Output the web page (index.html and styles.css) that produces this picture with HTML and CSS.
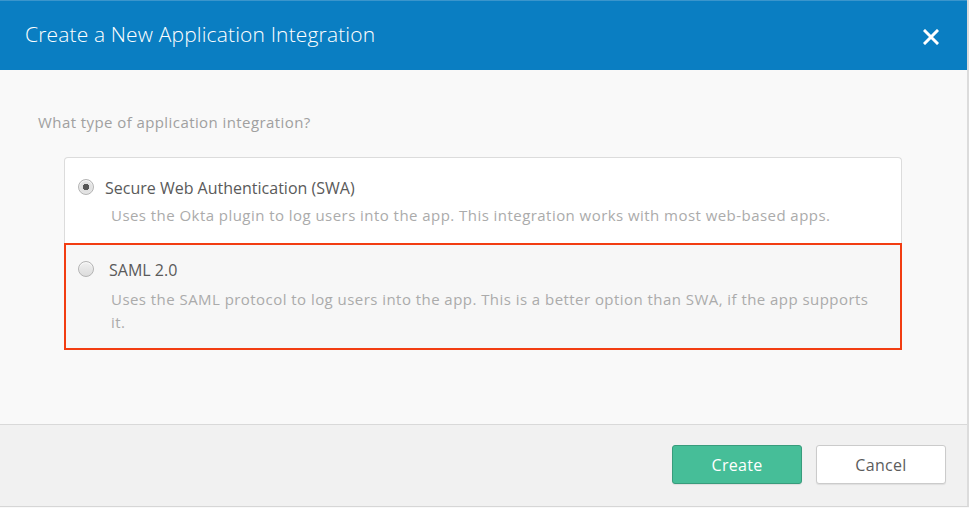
FILE: index.html
```html
<!DOCTYPE html>
<html lang="en">
<head>
<meta charset="utf-8">
<title>Create a New Application Integration</title>
<link rel="stylesheet" href="styles.css">
</head>
<body>
<div class="modal">
  <header class="modal-header">
    <h1 class="modal-title">Create a New Application Integration</h1>
    <button class="close" aria-label="Close">
      <svg width="16" height="16" viewBox="0 0 16 16"><path d="M2 2 L14 14 M14 2 L2 14" stroke="#fff" stroke-width="3" stroke-linecap="square"/></svg>
    </button>
  </header>
  <main class="modal-body">
    <p class="question">What type of application integration?</p>
    <div class="options">
      <label class="option option-first">
        <span class="radio checked"></span>
        <span class="option-text">
          <span class="option-title">Secure Web Authentication (SWA)</span>
          <span class="option-desc">Uses the Okta plugin to log users into the app. This integration works with most web-based apps.</span>
        </span>
      </label>
      <label class="option option-highlight">
        <span class="radio"></span>
        <span class="option-text">
          <span class="option-title">SAML 2.0</span>
          <span class="option-desc">Uses the SAML protocol to log users into the app. This is a better option than SWA, if the app supports it.</span>
        </span>
      </label>
    </div>
  </main>
  <footer class="modal-footer">
    <button class="btn btn-primary">Create</button>
    <button class="btn btn-default">Cancel</button>
  </footer>
</div>
</body>
</html>
```

FILE: styles.css
```css
html, body {
  margin: 0;
  padding: 0;
  background: #f9f9f9;
}
body {
  font-family: "Open Sans", "Noto Sans", Arial, sans-serif;
}
.modal {
  width: 967px;
  height: 506px;
  border-right: 2px solid #dcdcdc;
  border-bottom: 1px solid #d6d6d6;
  display: flex;
  flex-direction: column;
  background: #f9f9f9;
}
.modal-header {
  height: 70px;
  flex: none;
  box-sizing: border-box;
  background: #0a7ec2;
  border-top: 1px solid #3a95cc;
  display: flex;
  align-items: center;
  justify-content: space-between;
  padding: 0 25px 0 25px;
}
.modal-title {
  margin: 0;
  font-size: 21px;
  font-weight: 300;
  color: #fff;
  letter-spacing: 0.15px;
  padding-bottom: 3px;
}
.close {
  background: none;
  border: 0;
  padding: 0;
  width: 22px;
  height: 22px;
  display: flex;
  align-items: center;
  justify-content: center;
  margin-top: 2px;
}
.modal-body {
  flex: 1;
  padding: 0;
}
.question {
  margin: 42px 0 0 38px;
  font-size: 15px;
  letter-spacing: 0.42px;
  line-height: 20px;
  color: #a0a0a0;
}
.options {
  margin: 25px 0 0 64px;
  width: 838px;
}
.option {
  display: flex;
  align-items: flex-start;
  box-sizing: border-box;
}
.option-first {
  background: #fff;
  border: 1px solid #dcdcdc;
  border-bottom: 0;
  border-radius: 4px 4px 0 0;
  height: 86px;
  padding: 20px 0 0 13px;
}
.option-highlight {
  background: #f7f7f7;
  border: 2px solid #f23d12;
  height: 107px;
  padding: 15px 0 0 12px;
}
.radio {
  flex: none;
  width: 14px;
  height: 14px;
  border-radius: 50%;
  border: 1px solid #b4b4b4;
  background: linear-gradient(#f0f0f0, #dcdcdc);
  box-shadow: inset 0 1px 1px rgba(255,255,255,0.8);
  margin-top: 1px;
}
.radio.checked {
  background: radial-gradient(circle, #555 0, #555 3px, #e0e0e0 3.5px, #e8e8e8 100%);
}
.option-text {
  display: flex;
  flex-direction: column;
  margin-left: 11px;
}
.option-highlight .option-text {
  margin-left: 15px;
}
.option-title {
  font-size: 16px;
  line-height: 20px;
  color: #5a5a5a;
}
.option-desc {
  font-size: 15px;
  letter-spacing: 0.45px;
  line-height: 23px;
  color: #ababab;
  margin-top: 6px;
  margin-left: 6px;
  width: 760px;
}
.option-highlight .option-desc {
  margin-left: 2px;
  margin-top: 8px;
  width: 770px;
}
.modal-footer {
  flex: none;
  height: 82px;
  box-sizing: border-box;
  border-top: 1px solid #d9d9d9;
  background: #f1f1f1;
  display: flex;
  justify-content: flex-end;
  align-items: flex-start;
  gap: 14px;
  padding: 20px 21px 0 0;
}
.btn {
  width: 130px;
  height: 39px;
  border-radius: 3px;
  font-family: "Open Sans", "Noto Sans", Arial, sans-serif;
  font-size: 16px;
  letter-spacing: 0.3px;
  cursor: pointer;
}
.btn-primary {
  background: #46be98;
  border: 1px solid #389c7c;
  color: #fff;
  box-shadow: 0 1px 1px rgba(0,0,0,0.08);
}
.btn-default {
  background: #fff;
  border: 1px solid #cbcbcb;
  color: #5c5c5c;
  box-shadow: 0 1px 1px rgba(0,0,0,0.08);
}
```
